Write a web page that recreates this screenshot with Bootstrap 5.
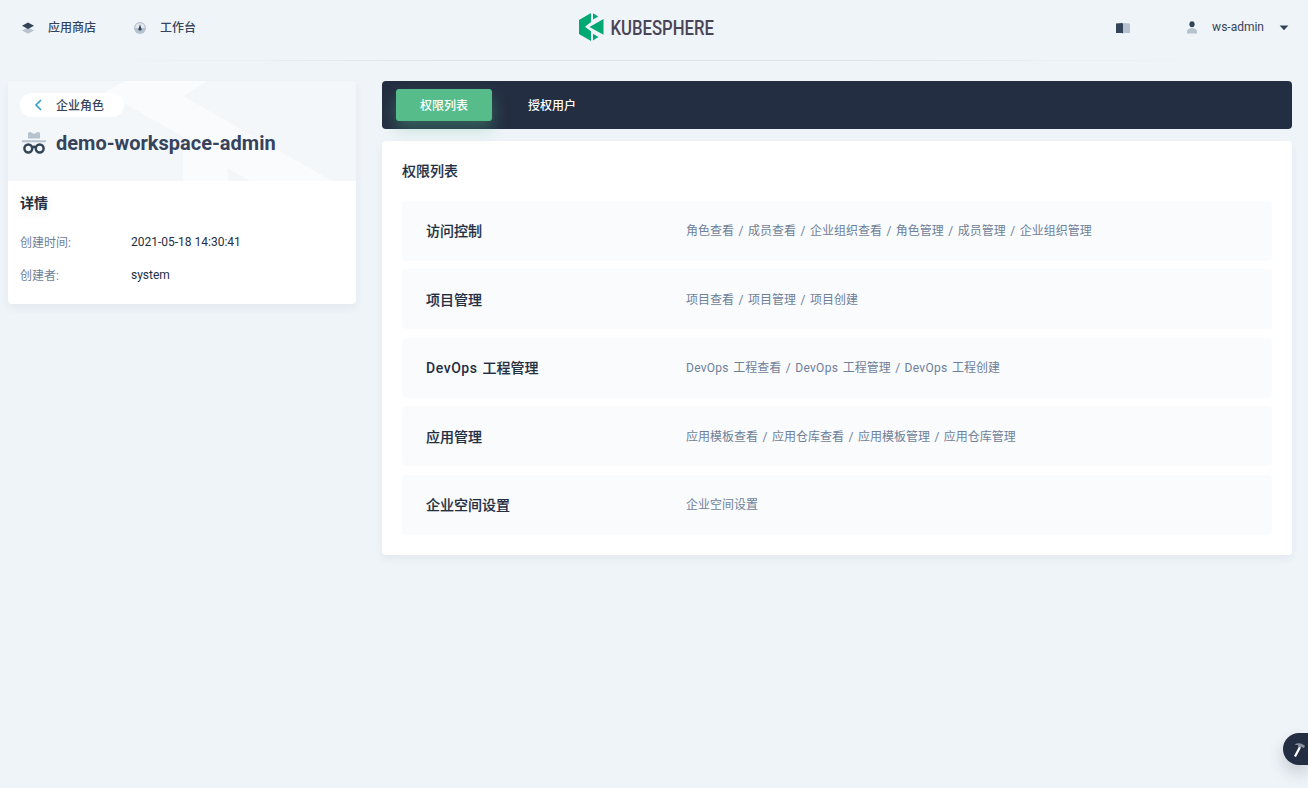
<!DOCTYPE html>
<html lang="zh-CN">
<head>
<meta charset="utf-8">
<meta name="viewport" content="width=device-width, initial-scale=1">
<title>KubeSphere</title>
<link href="https://cdn.jsdelivr.net/npm/bootstrap@5.3.0/dist/css/bootstrap.min.css" rel="stylesheet">
<style>
body{font-family:Roboto,"Noto Sans CJK SC",sans-serif;font-size:12px;line-height:20px;color:#242e42;background:#eff4f9;min-height:788px;overflow:hidden}
.topbar{height:61px;padding:0 16px 0 20px;color:#36435c;background:linear-gradient(90deg,transparent 8%,#dfe4eb 35%,#dfe4eb 65%,transparent 92%) bottom/100% 1px no-repeat}
.topbar>*{height:55px}
.topbar a{color:inherit;text-decoration:none;font-weight:500}
.topbar .shop-link{width:112px;gap:12px}
.topbar .desk-link{gap:12px}
.topbar svg,.title-line svg{display:block;flex:none}
.brand{position:absolute;left:578px;top:12px;height:34px!important}
.docs-icon{margin-right:53px}
.user-name{margin:0 12px;padding-bottom:2px}
.page-main{padding:20px 16px 0 8px;gap:26px}
.side{width:348px;border-radius:4px;box-shadow:0 4px 8px rgba(36,46,66,.06)}
.side-head{height:100px;padding:12px;background:#f3f7fa;position:relative;border-radius:4px 4px 0 0;overflow:hidden}
.watermark{position:absolute;inset:0}
.back-pill{position:relative;width:104px;height:24px;border-radius:12px;background:#fff;padding-left:12px;gap:10px;color:#36435c;font-weight:500;text-decoration:none}
.back-pill span{padding-top:1px}
.title-line{position:relative;margin-top:10px;height:32px;color:#36435c}
.title-line h1{font-size:20px;line-height:32px;font-weight:700;margin:0}
.side-body{padding:12px 12px 19px}
.side-body dl{padding-top:19px}
.sub-title{font-size:14px;line-height:20px;font-weight:700;margin:0}
.perm-card .sub-title{font-weight:500;-webkit-text-stroke:.12px}
.side-body .sub-title{text-shadow:0 4px 8px rgba(36,46,66,.1)}
.prop{display:flex;height:20px}
.prop+.prop{margin-top:13px}
.prop dt{width:111px;padding-top:1px;font-weight:400;color:#6f7f99}
.prop dd{margin:0}
.tabs-bar{height:48px;padding:8px 14px;background:#242e42;border-radius:4px;gap:12px}
.tabs-bar .btn{width:96px;height:32px;padding:2px 0 0;font-size:12px;line-height:30px;font-weight:500;color:#fff;border:0;border-radius:3px}
.tabs-bar .btn.active{background:#55bc8a;color:#fff;box-shadow:0 8px 16px rgba(85,188,138,.36)}
.perm-card{margin-top:12px;height:414px;padding:20px;border-radius:4px;box-shadow:0 4px 8px rgba(36,46,66,.06)}
.perm-list{margin-top:20px;gap:8.4px}
.perm-row{height:60px;padding:.7px 24px 0;background:#f9fbfd;border-radius:4px;color:#6f7f99;word-spacing:1.52px}
.perm-row strong{width:260px;font-size:14px;font-weight:500;color:#242e42;-webkit-text-stroke:.15px}
.perm-row strong i{-webkit-text-stroke:0}
.perm-row i{font-style:normal;letter-spacing:.28px}
.perm-row strong i{letter-spacing:.55px}
.tool-fab{position:fixed;right:0;top:733px;width:25px;height:32px;border-radius:16px 0 0 16px;background:#242e42;box-shadow:0 8px 16px rgba(36,46,66,.2)}
</style>
</head>
<body>
<header class="topbar d-flex justify-content-between position-relative">
  <nav class="d-flex align-items-center">
    <a href="#" class="shop-link d-flex align-items-center">
      <svg width="16" height="16" viewBox="0 0 16 16"><path d="M2 10.500 8 7.500l6 3-6 3.200z" fill="#b6c2cd"/><path d="M2 5.700 8 2.600l6 3.100-6 3.400z" fill="#324558"/></svg>
      <span>应用商店</span>
    </a>
    <a href="#" class="desk-link d-flex align-items-center">
      <svg width="16" height="16" viewBox="0 0 16 16"><circle cx="8" cy="8" r="6" fill="#b6c2cd"/><path d="M3.200 8a4.800 4.800 0 0 1 9.600 0z" fill="#e3e9ef"/><path d="M8 4.200 9.400 8.500a1.500 1.500 0 1 1-2.800 0z" fill="#324558"/></svg>
      <span>工作台</span>
    </a>
  </nav>
  <a class="brand" href="#" aria-label="KubeSphere">
    <svg width="180" height="34" viewBox="0 0 180 34">
      <path d="M1 8 13 1v9l-6 4.800 6 4.500V29L1 22z" fill="#00a971"/>
      <path d="M15 1.200 20.300 4.400 15 7.600zM25.500 7v15.700L11.500 15zM15 21.700l5.400 3.400L15 28.400z" fill="#00a971"/>
      <text x="32.500" y="22.500" font-family="Roboto, sans-serif" font-size="20.500" font-weight="500" fill="#4a4457" textLength="103.500" lengthAdjust="spacingAndGlyphs">KUBESPHERE</text>
    </svg>
  </a>
  <div class="d-flex align-items-center">
    <svg width="16" height="16" viewBox="0 0 16 16" class="docs-icon"><path d="M1 3.500 7 3l1 .6v10l-1-.6H1z" fill="#324558"/><path d="M15 3.500 9 3l-1 .6v10l1-.6h6z" fill="#b6c2cd"/></svg>
    <svg width="16" height="16" viewBox="0 0 16 16"><path d="M3 13.500v-2C3 9 5 8.300 8 8.300s5 .7 5 3.200v2z" fill="#b6c2cd"/><ellipse cx="8" cy="4.200" rx="2.600" ry="3" fill="#324558"/></svg>
    <span class="user-name">ws-admin</span>
    <svg width="16" height="16" viewBox="0 0 16 16"><path d="M3.600 5.500h8.800L8 10.300z" fill="#324558"/></svg>
  </div>
</header>
<main class="page-main d-flex align-items-start">
  <aside class="side bg-white flex-shrink-0">
    <div class="side-head">
      <svg class="watermark" width="348" height="100" viewBox="0 0 348 100"><path d="M97 11 117 0h83l-25 15 149 85h-82l-22-13v13h-45V56z" fill="#f9fbfd"/></svg>
      <a href="#" class="back-pill d-flex align-items-center">
        <svg width="14" height="14" viewBox="0 0 14 14"><path d="M9 2 4 7l5 5" fill="none" stroke="#329dce" stroke-width="1.600"/></svg>
        <span>企业角色</span>
      </a>
      <div class="title-line d-flex align-items-center">
        <svg width="28" height="28" viewBox="0 0 28 28" class="me-2"><path d="M8 9.500V3.800L10.500 3 14 5l3.500-2 2.500.8v5.700zM2 11.300h24v2H2z" fill="#b6c2cd"/><g fill="none" stroke="#324558" stroke-width="2.500"><circle cx="8.300" cy="19.500" r="3.900"/><circle cx="19.700" cy="19.500" r="3.900"/><path d="M12 18.500q2-1.500 4 0"/></g></svg>
        <h1>demo-workspace-admin</h1>
      </div>
    </div>
    <div class="side-body">
      <h2 class="sub-title">详情</h2>
      <dl class="mb-0">
        <div class="prop"><dt>创建时间:</dt><dd>2021-05-18 14:30:41</dd></div>
        <div class="prop"><dt>创建者:</dt><dd>system</dd></div>
      </dl>
    </div>
  </aside>
  <section class="flex-grow-1">
    <div class="tabs-bar d-flex"><button class="btn active">权限列表</button><button class="btn">授权用户</button></div>
    <div class="perm-card bg-white">
      <h2 class="sub-title">权限列表</h2>
      <div class="perm-list d-flex flex-column">
        <div class="perm-row d-flex align-items-center"><strong>访问控制</strong><span>角色查看 / 成员查看 / 企业组织查看 / 角色管理 / 成员管理 / 企业组织管理</span></div>
        <div class="perm-row d-flex align-items-center"><strong>项目管理</strong><span>项目查看 / 项目管理 / 项目创建</span></div>
        <div class="perm-row d-flex align-items-center"><strong><i>DevOps</i> 工程管理</strong><span><i>DevOps</i> 工程查看 / <i>DevOps</i> 工程管理 / <i>DevOps</i> 工程创建</span></div>
        <div class="perm-row d-flex align-items-center"><strong>应用管理</strong><span>应用模板查看 / 应用仓库查看 / 应用模板管理 / 应用仓库管理</span></div>
        <div class="perm-row d-flex align-items-center"><strong>企业空间设置</strong><span>企业空间设置</span></div>
      </div>
    </div>
  </section>
</main>
<button class="tool-fab border-0 p-0 d-flex align-items-center" aria-label="工具箱">
  <svg width="25" height="32" viewBox="0 0 25 32"><path d="M11 23 16 13.500l2 1L13 24z" fill="#fff"/><path d="M11.500 11.500q4-2.500 8.500 0l2 1.500-1.200 2-2.300-1-1 .8-2.500-1.300.3-1.200z" fill="#8a93a1"/></svg>
</button>
<script src="https://cdn.jsdelivr.net/npm/bootstrap@5.3.0/dist/js/bootstrap.bundle.min.js"></script>
</body>
</html>
